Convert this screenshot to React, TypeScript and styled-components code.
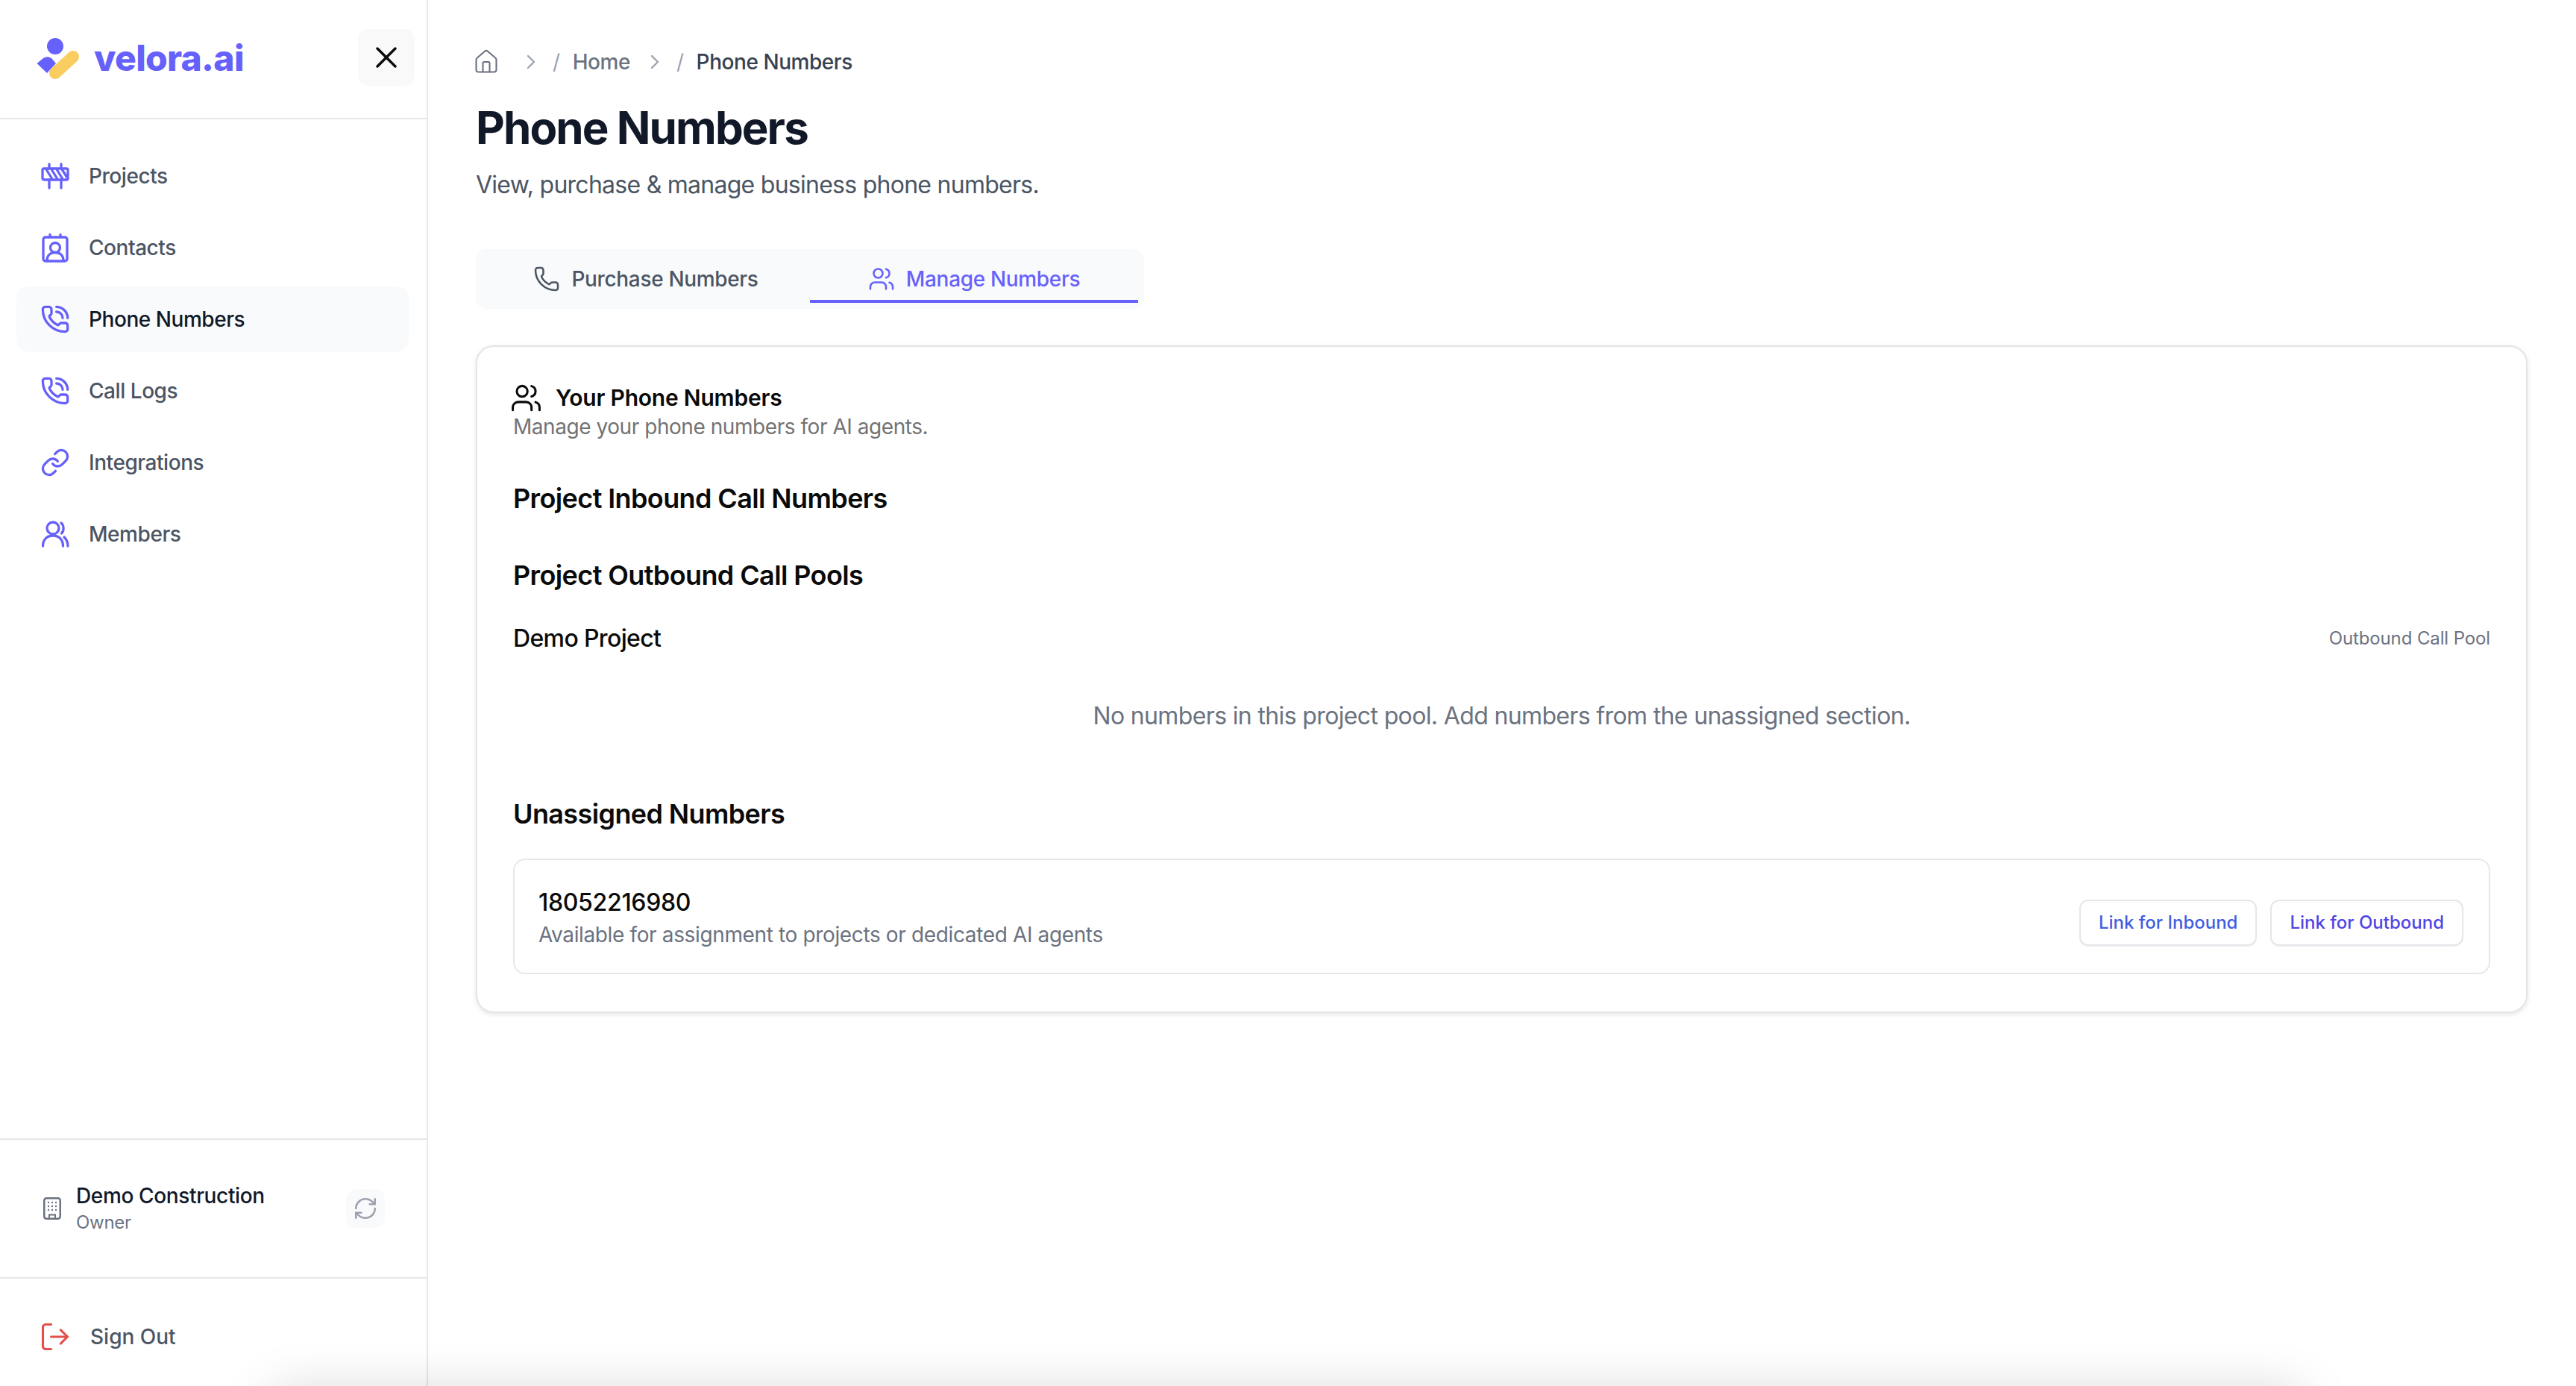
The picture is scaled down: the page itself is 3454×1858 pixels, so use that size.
import React from 'react';
import styled, { createGlobalStyle } from 'styled-components';
import { Phone, PhoneCall, Link, Users, X, RefreshCw, LogOut, House, ChevronRight } from 'lucide-react';

const GlobalStyle = createGlobalStyle`
  html, body {
    margin: 0;
    height: 100%;
    overflow: hidden;
    background: #ffffff;
    font-family: Inter, "Liberation Sans", sans-serif;
  }
  #root {
    height: 100%;
  }
  * {
    box-sizing: border-box;
  }
`;

const Shell = styled.div`
  display: flex;
  height: 100vh;
`;

const Sidebar = styled.aside`
  width: 574px;
  flex-shrink: 0;
  display: flex;
  flex-direction: column;
  border-right: 2px solid #e5e7eb;
`;

const SidebarHeader = styled.div`
  height: 160px;
  flex-shrink: 0;
  display: flex;
  align-items: center;
  justify-content: space-between;
  padding: 0 16px 4px 45px;
  border-bottom: 2px solid #e5e7eb;
`;

const Brand = styled.div`
  display: flex;
  align-items: center;
  gap: 17px;
`;

const BrandName = styled.span`
  font-size: 48px;
  font-weight: 800;
  letter-spacing: -0.7px;
  color: #6761fb;
`;

const CloseButton = styled.button`
  width: 76px;
  height: 76px;
  border: 0;
  padding: 0;
  border-radius: 14px;
  background: #f9f9f9;
  color: #0a0a0a;
  display: flex;
  align-items: center;
  justify-content: center;
`;

const Nav = styled.nav`
  flex: 1;
  display: flex;
  flex-direction: column;
  gap: 8px;
  padding: 32px 24px 0 22px;
`;

const NavItem = styled.a<{ $active?: boolean }>`
  height: 88px;
  display: flex;
  align-items: center;
  gap: 25px;
  padding-left: 32px;
  border-radius: 16px;
  font-size: 28px;
  font-weight: 500;
  letter-spacing: -0.016em;
  color: ${(p) => (p.$active ? '#111827' : '#4b5563')};
  background: ${(p) => (p.$active ? '#f9fafb' : 'transparent')};

  svg {
    flex-shrink: 0;
    color: #6761fb;
  }
`;

const OrgBlock = styled.div`
  height: 188px;
  flex-shrink: 0;
  display: flex;
  align-items: center;
  padding: 0 56px 0 58px;
  border-top: 2px solid #e5e7eb;
  border-bottom: 2px solid #e5e7eb;
`;

const OrgText = styled.div`
  flex: 1;
  margin-left: 20px;
`;

const OrgName = styled.div`
  font-size: 28px;
  line-height: 38px;
  font-weight: 500;
  letter-spacing: -0.013em;
  color: #111827;
`;

const OrgRole = styled.div`
  font-size: 24px;
  line-height: 34px;
  letter-spacing: -0.012em;
  color: #6b7280;
`;

const SwitchButton = styled.button`
  width: 52px;
  height: 52px;
  border: 0;
  padding: 0;
  border-radius: 14px;
  background: #f9fafb;
  color: #9ca3af;
  display: flex;
  align-items: center;
  justify-content: center;
`;

const SignOut = styled.a`
  height: 144px;
  flex-shrink: 0;
  display: flex;
  align-items: center;
  gap: 25px;
  padding: 12px 0 0 52px;
  font-size: 28px;
  font-weight: 500;
  color: #4b5563;

  svg {
    color: #e2504c;
  }
`;

const Main = styled.main`
  flex: 1;
  min-width: 0;
  padding: 60px 65px 0 64px;
`;

const Breadcrumb = styled.div`
  height: 46px;
  display: flex;
  align-items: center;
  font-size: 28px;
  font-weight: 500;
  letter-spacing: -0.016em;
  color: #6b7280;

  svg {
    flex-shrink: 0;
  }
`;

const HomeIcon = styled(House)`
  color: #6b7280;
  margin: 0 9px 0 -4px;
`;

const Crumb = styled.span<{ $current?: boolean }>`
  color: ${(p) => (p.$current ? '#374151' : '#6b7280')};
`;

const CrumbChevron = styled(ChevronRight)`
  color: #9ca3af;
  margin: 0 13px 0 17px;
`;

const CrumbSlash = styled.span`
  color: #9ca3af;
  font-weight: 400;
  margin-right: 17px;
`;

const Title = styled.h1`
  margin: 29px 0 0;
  font-size: 60px;
  line-height: 72px;
  font-weight: 700;
  letter-spacing: -0.032em;
  color: #111827;
`;

const Subtitle = styled.p`
  margin: 17px 0 0;
  font-size: 32px;
  line-height: 48px;
  letter-spacing: -0.023em;
  color: #4b5563;
`;

const Tabs = styled.div`
  width: 896px;
  height: 80px;
  margin-top: 62px;
  padding: 8px;
  display: grid;
  grid-template-columns: 1fr 1fr;
  border-radius: 14px;
  background: #f9fafb;
`;

const Tab = styled.button<{ $active?: boolean }>`
  border: 0;
  padding: 4px 0 0;
  background: transparent;
  display: flex;
  align-items: center;
  justify-content: center;
  gap: 15px;
  font-family: inherit;
  font-size: 28px;
  font-weight: 500;
  letter-spacing: -0.012em;
  color: ${(p) => (p.$active ? '#6761fb' : '#4b5563')};
  border-bottom: 4px solid ${(p) => (p.$active ? '#6761fb' : 'transparent')};
`;

const Card = styled.section`
  margin-top: 49px;
  height: 895px;
  padding: 48px;
  border: 2px solid #e5e5e5;
  border-radius: 24px;
  background: #ffffff;
  box-shadow: 0 2px 6px rgba(0, 0, 0, 0.1);
`;

const CardTitleRow = styled.div`
  display: flex;
  align-items: center;
  gap: 18px;
  height: 40px;
  font-size: 30px;
  font-weight: 600;
  letter-spacing: -0.007em;
  color: #0a0a0a;

  svg {
    flex-shrink: 0;
    margin-left: -4px;
  }
`;

const CardSubtitle = styled.p`
  margin: 0;
  font-size: 28px;
  line-height: 38px;
  letter-spacing: -0.016em;
  color: #737373;
`;

const SectionTitle = styled.h3<{ $gap: number }>`
  margin: ${(p) => p.$gap}px 0 0;
  font-size: 36px;
  line-height: 50px;
  font-weight: 600;
  letter-spacing: -0.017em;
  color: #0a0a0a;
`;

const PoolRow = styled.div`
  margin-top: 37px;
  height: 44px;
  display: flex;
  align-items: center;
  justify-content: space-between;
`;

const PoolName = styled.span`
  font-size: 32px;
  font-weight: 500;
  letter-spacing: -0.02em;
  color: #0a0a0a;
`;

const PoolTag = styled.span`
  font-size: 24px;
  letter-spacing: -0.005em;
  color: #6b7280;
`;

const EmptyNote = styled.p`
  margin: 59px 0 0;
  font-size: 32px;
  line-height: 48px;
  letter-spacing: -0.02em;
  text-align: center;
  color: #6b7280;
`;

const NumberBox = styled.div`
  margin-top: 35px;
  height: 155px;
  display: flex;
  align-items: center;
  justify-content: space-between;
  padding: 0 34px 0 32px;
  border: 2px solid #e5e7eb;
  border-radius: 16px;
`;

const NumberInfo = styled.div`
  margin-top: 4px;
`;

const NumberValue = styled.div`
  font-size: 32px;
  line-height: 44px;
  font-weight: 500;
  letter-spacing: -0.01em;
  color: #0a0a0a;
`;

const NumberNote = styled.div`
  font-size: 28px;
  line-height: 42px;
  letter-spacing: -0.013em;
  color: #6b7280;
`;

const Actions = styled.div`
  display: flex;
  gap: 18px;
  margin-top: 16px;
`;

const LinkButton = styled.button<{ $tone: string }>`
  height: 62px;
  padding: 0 24px;
  border: 2px solid #e5e7eb;
  border-radius: 12px;
  background: #ffffff;
  box-shadow: 0 1px 2px rgba(0, 0, 0, 0.06);
  font-family: inherit;
  font-size: 24px;
  font-weight: 500;
  color: ${(p) => p.$tone};
`;

// soft shadow of something sitting just under the visible page
const BottomGlow = styled.div`
  position: fixed;
  left: 365px;
  right: 369px;
  top: 1868px;
  height: 120px;
  box-shadow: 0 0 70px rgba(0, 0, 0, 0.18);
  pointer-events: none;
`;

const Logo = () => (
  <svg width="64" height="64" viewBox="45 45 64 64">
    <circle cx="74" cy="62" r="11" fill="#6761fb" />
    <path d="M49.5 85 L58 78 Q63.5 74.5 69 78 L75 85 L63 98 Z" fill="#6761fb" />
    <path d="M98 76 L74 98" stroke="#f9cd5f" strokeWidth="16" strokeLinecap="round" fill="none" />
  </svg>
);

const BarrierIcon = () => (
  <svg width="40" height="40" viewBox="0 0 40 40" fill="none" stroke="currentColor" strokeWidth="3.3" strokeLinecap="round" strokeLinejoin="round">
    <rect x="3" y="10" width="34" height="15" rx="2" />
    <path d="M12 4v6M28 4v6M12 25v11M28 25v11" />
    <path d="M8 11l8 13M15 11l8 13M22 11l8 13M29 11l7 11" strokeLinecap="butt" />
  </svg>
);

const ContactIcon = () => (
  <svg width="40" height="40" viewBox="0 0 40 40" fill="none" stroke="currentColor" strokeWidth="3.3" strokeLinecap="round" strokeLinejoin="round">
    <rect x="4" y="6" width="32" height="32" rx="3" />
    <path d="M13 2.500v3M27 2.500v3" />
    <circle cx="20" cy="20" r="6.500" />
    <path d="M9 37c0-7 5-10.500 11-10.500S31 30 31 37" />
  </svg>
);

const MembersIcon = () => (
  <svg width="40" height="40" viewBox="0 0 40 40" fill="none" stroke="currentColor" strokeWidth="3.3" strokeLinecap="round">
    <circle cx="17" cy="12" r="8" />
    <path d="M3.500 36c0-9 6-14 13.500-14s13.500 5 13.500 14" />
    <path d="M28 5c4 3 4 11 .5 14" />
    <path d="M32 24c3 3 5 7 5 12" />
  </svg>
);

const BuildingIcon = () => (
  <svg width="24" height="30" viewBox="0 0 24 30" fill="none" stroke="#6b7280" strokeWidth="2.500">
    <rect x="1.250" y="1.250" width="21.500" height="27.500" rx="3" />
    <path d="M8 28v-4.500h8V28" strokeWidth="2" />
    <g fill="#6b7280" stroke="none">
      <circle cx="7" cy="7" r="1.200" />
      <circle cx="12" cy="7" r="1.200" />
      <circle cx="17" cy="7" r="1.200" />
      <circle cx="7" cy="12" r="1.200" />
      <circle cx="12" cy="12" r="1.200" />
      <circle cx="17" cy="12" r="1.200" />
      <circle cx="7" cy="17" r="1.200" />
      <circle cx="12" cy="17" r="1.200" />
      <circle cx="17" cy="17" r="1.200" />
    </g>
  </svg>
);

const navItems = [
  { label: 'Projects', icon: <BarrierIcon /> },
  { label: 'Contacts', icon: <ContactIcon /> },
  { label: 'Phone Numbers', icon: <PhoneCall size={40} strokeWidth={2} />, active: true },
  { label: 'Call Logs', icon: <PhoneCall size={40} strokeWidth={2} /> },
  { label: 'Integrations', icon: <Link size={40} strokeWidth={2} /> },
  { label: 'Members', icon: <MembersIcon /> },
];

export default function App() {
  return (
    <>
      <GlobalStyle />
      <Shell>
        <Sidebar>
          <SidebarHeader>
            <Brand>
              <Logo />
              <BrandName>velora.ai</BrandName>
            </Brand>
            <CloseButton>
              <X size={48} strokeWidth={1.7} />
            </CloseButton>
          </SidebarHeader>
          <Nav>
            {navItems.map((item) => (
              <NavItem key={item.label} $active={item.active}>
                {item.icon}
                {item.label}
              </NavItem>
            ))}
          </Nav>
          <OrgBlock>
            <BuildingIcon />
            <OrgText>
              <OrgName>Demo Construction</OrgName>
              <OrgRole>Owner</OrgRole>
            </OrgText>
            <SwitchButton>
              <RefreshCw size={34} strokeWidth={1.8} />
            </SwitchButton>
          </OrgBlock>
          <SignOut>
            <LogOut size={44} strokeWidth={1.7} />
            Sign Out
          </SignOut>
        </Sidebar>
        <Main>
          <Breadcrumb>
            <HomeIcon size={36} strokeWidth={1.4} />
            <CrumbChevron size={32} strokeWidth={1.8} />
            <CrumbSlash>/</CrumbSlash>
            <Crumb>Home</Crumb>
            <CrumbChevron size={32} strokeWidth={1.8} />
            <CrumbSlash>/</CrumbSlash>
            <Crumb $current>Phone Numbers</Crumb>
          </Breadcrumb>
          <Title>Phone Numbers</Title>
          <Subtitle>View, purchase &amp; manage business phone numbers.</Subtitle>
          <Tabs>
            <Tab>
              <Phone size={36} strokeWidth={1.7} />
              Purchase Numbers
            </Tab>
            <Tab $active>
              <Users size={36} strokeWidth={1.7} />
              Manage Numbers
            </Tab>
          </Tabs>
          <Card>
            <CardTitleRow>
              <Users size={43} strokeWidth={1.7} />
              Your Phone Numbers
            </CardTitleRow>
            <CardSubtitle>Manage your phone numbers for AI agents.</CardSubtitle>
            <SectionTitle $gap={52}>Project Inbound Call Numbers</SectionTitle>
            <SectionTitle $gap={53}>Project Outbound Call Pools</SectionTitle>
            <PoolRow>
              <PoolName>Demo Project</PoolName>
              <PoolTag>Outbound Call Pool</PoolTag>
            </PoolRow>
            <EmptyNote>No numbers in this project pool. Add numbers from the unassigned section.</EmptyNote>
            <SectionTitle $gap={82}>Unassigned Numbers</SectionTitle>
            <NumberBox>
              <NumberInfo>
                <NumberValue>18052216980</NumberValue>
                <NumberNote>Available for assignment to projects or dedicated AI agents</NumberNote>
              </NumberInfo>
              <Actions>
                <LinkButton $tone="#3f5fe0">Link for Inbound</LinkButton>
                <LinkButton $tone="#4f46e5">Link for Outbound</LinkButton>
              </Actions>
            </NumberBox>
          </Card>
        </Main>
      </Shell>
      <BottomGlow />
    </>
  );
}
